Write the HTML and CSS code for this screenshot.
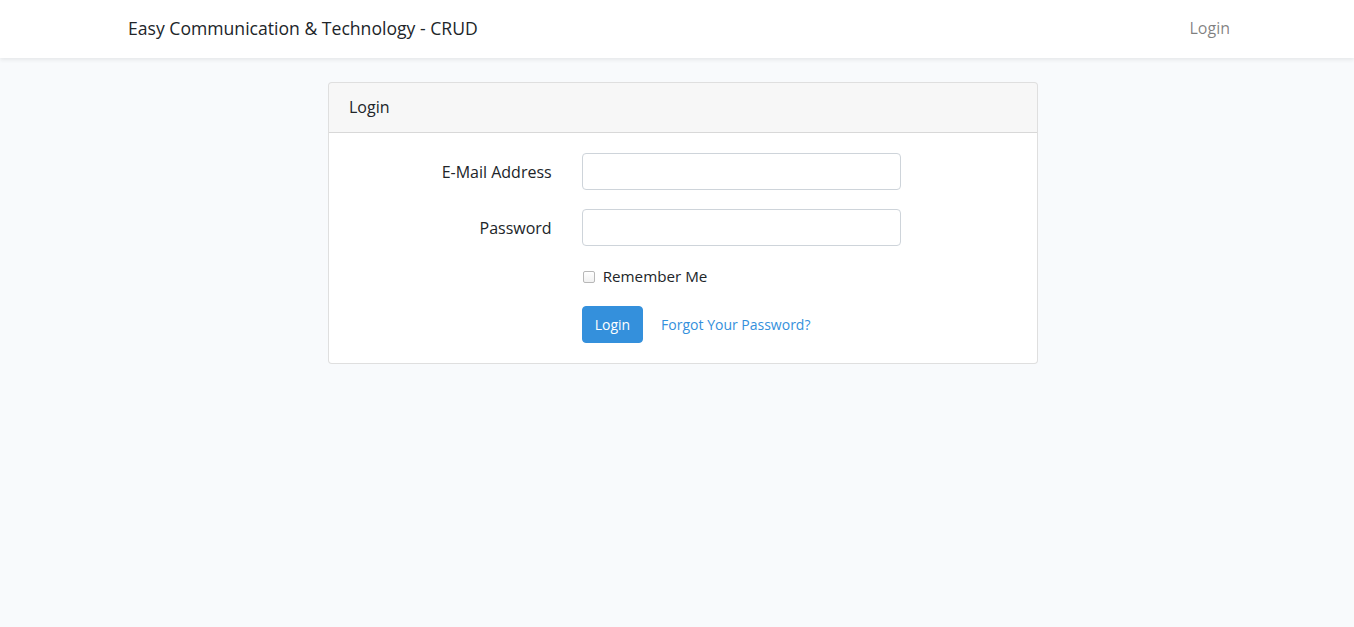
FILE: index.html
```html
<!DOCTYPE html>
<html lang="en">
<head>
<meta charset="utf-8">
<title>Easy Communication &amp; Technology - CRUD</title>
<link rel="stylesheet" href="styles.css">
</head>
<body>
<nav class="navbar">
  <div class="container nav-inner">
    <a class="brand" href="#">Easy Communication &amp; Technology - CRUD</a>
    <ul class="nav-links">
      <li><a class="nav-link" href="#">Login</a></li>
    </ul>
  </div>
</nav>
<main class="main">
  <div class="container">
    <div class="card">
      <div class="card-header">Login</div>
      <div class="card-body">
        <form>
          <div class="form-row">
            <label class="label-col" for="email">E-Mail Address</label>
            <div class="field-col"><input id="email" class="input" type="email"></div>
          </div>
          <div class="form-row">
            <label class="label-col" for="password">Password</label>
            <div class="field-col"><input id="password" class="input" type="password"></div>
          </div>
          <div class="form-row check-row">
            <div class="field-col offset">
              <label class="check"><input type="checkbox" class="checkbox"><span>Remember Me</span></label>
            </div>
          </div>
          <div class="form-row last">
            <div class="field-col offset actions">
              <button type="button" class="btn btn-primary">Login</button>
              <a class="btn btn-link" href="#">Forgot Your Password?</a>
            </div>
          </div>
        </form>
      </div>
    </div>
  </div>
</main>
</body>
</html>
```
FILE: styles.css
```css
* { box-sizing: border-box; }
body {
  margin: 0;
  background: #f8fafc;
  font-family: "Open Sans", "Noto Sans", sans-serif;
  font-size: 16px;
  line-height: 1.6;
  color: #212529;
}
.container {
  width: 1110px;
  margin-left: calc(50% - 549px);
}
.navbar {
  background: #fff;
  box-shadow: 0 2px 4px rgba(0, 0, 0, 0.075);
  padding: 8px 0;
}
.nav-inner {
  display: flex;
  align-items: center;
  justify-content: space-between;
}
.brand {
  font-size: 17.6px;
  line-height: 28.8px;
  padding: 5px 0;
  color: #212529;
  text-decoration: none;
}
.nav-links {
  list-style: none;
  margin: 0;
  padding: 0;
  display: flex;
}
.nav-link {
  display: block;
  padding: 8px;
  color: rgba(0, 0, 0, 0.5);
  text-decoration: none;
}
.main { padding: 24px 0; }
.card {
  width: 710px;
  margin: 0 auto;
  background: #fff;
  border: 1px solid rgba(0, 0, 0, 0.125);
  border-radius: 4px;
}
.card-header {
  padding: 12px 20px;
  background: rgba(0, 0, 0, 0.03);
  border-bottom: 1px solid rgba(0, 0, 0, 0.125);
  border-radius: 3px 3px 0 0;
}
.card-body { padding: 20px; }
.form-row {
  display: flex;
  margin: 0 -15px 16px;
}
.form-row.check-row { margin-bottom: 15px; }
.form-row.last { margin-bottom: 0; }
.label-col {
  flex: 0 0 33.3333%;
  padding: 7px 15px;
  text-align: right;
}
.field-col {
  flex: 0 0 50%;
  padding: 0 15px;
}
.offset { margin-left: 33.3333%; }
.input {
  display: block;
  width: 100%;
  height: 37px;
  padding: 6px 12px;
  font-family: inherit;
  font-size: 14.4px;
  border: 1px solid #ced4da;
  border-radius: 4px;
  background: #fff;
  color: #495057;
}
.check {
  display: inline-flex;
  align-items: center;
  font-size: 15.2px;
  line-height: 25.6px;
}
.checkbox {
  appearance: none;
  -webkit-appearance: none;
  width: 12px;
  height: 12px;
  margin: 0 8px 0 1px;
  border: 1px solid #b8b8b8;
  border-radius: 2px;
  background: linear-gradient(#fff, #f1f1f1);
}
.actions { display: flex; align-items: center; gap: 5px; }
.btn {
  display: inline-block;
  padding: 6px 12px;
  font-family: inherit;
  font-size: 14px;
  line-height: 23px;
  border: 1px solid transparent;
  border-radius: 4px;
  text-decoration: none;
}
.btn-primary {
  background: #3490dc;
  border-color: #3490dc;
  color: #fff;
}
.btn-link {
  color: #3490dc;
  background: transparent;
}
```
